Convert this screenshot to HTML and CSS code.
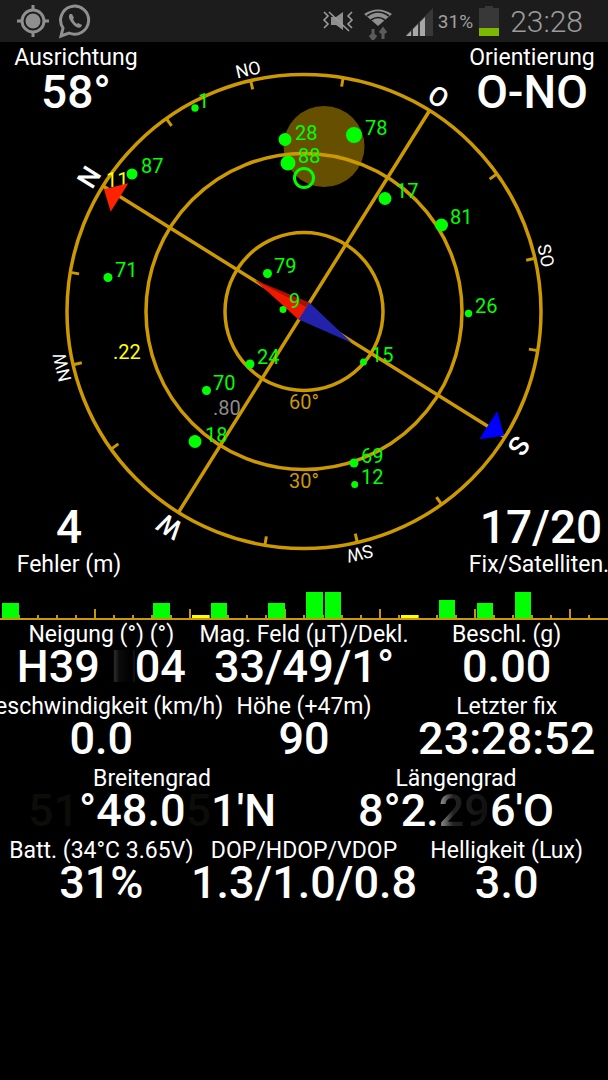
FILE: index.html
```html
<!DOCTYPE html>
<html lang="de">
<head>
<meta charset="utf-8">
<title>GPS Status</title>
<link rel="stylesheet" href="styles.css">
</head>
<body>
<header class="statusbar">
  <div class="status-left">
    <svg class="ico" width="36" height="36" viewBox="0 0 36 36"><circle cx="17" cy="18" r="11" class="ico-line"/><circle cx="17" cy="18" r="7.5" class="ico-fill"/><path d="M17 2v6M17 28v6M1 18h6M27 18h6" class="ico-line"/></svg>
    <svg class="ico" width="34" height="36" viewBox="0 0 34 36"><path d="M3 33l2-8A14 14 0 1 1 11 30z" class="ico-line"/><path d="M12 11c-2 2-1 5 2 9s7 6 9 4l1-2-4-2-1 1c-2-1-3-3-4-5l1-1-2-4z" class="ico-fill"/></svg>
  </div>
  <div class="status-right">
    <svg class="ico" width="32" height="24" viewBox="0 0 32 24"><path d="M9 8h5l7-5v18l-7-5H9z" class="ico-fill"/><path d="M2 3l4 4-4 4 4 4-4 4M30 3l-4 4 4 4-4 4 4 4M7 3l20 19" class="ico-thin"/></svg>
    <svg class="ico wifi" width="28" height="32" viewBox="0 0 28 32"><path d="M14 18L0 6Q14-3 28 6z" class="ico-fill"/><path d="M3 8Q14 0 25 8M7 12Q14 7 21 12" class="ico-cut"/><path d="M9 21v9M6 27l3 4 3-4M19 31v-9M16 25l3-4 3 4" class="ico-dim"/></svg>
    <svg class="ico signal" width="30" height="30" viewBox="0 0 30 30"><path d="M1 29L29 1v28z" class="ico-dark"/><path d="M2 29l5-5v5zM9 29v-7l5-5v12zM16 29V15l5-5v19z" class="ico-bright"/></svg>
    <span class="pct">31%</span>
    <svg class="ico battery" width="20" height="30" viewBox="0 0 20 30"><path d="M6 0h8v2h6v28H0V2h6z" class="ico-dark"/><rect y="22" width="20" height="8" class="batt-level"/></svg>
    <span class="clock">23:28</span>
  </div>
</header>

<section class="compass">
  <svg class="dial" width="608" height="548" viewBox="0 42 608 548">
    <circle cx="324" cy="146.5" r="40.5" class="sun"/>
    <circle cx="304" cy="311.5" r="237" class="ring"/>
    <circle cx="304" cy="311.5" r="158" class="ring"/>
    <circle cx="304" cy="311.5" r="79" class="ring"/>
    <g transform="translate(304 311.5) rotate(-58)">
      <path d="M0-237V237M-237 0H237" class="ring"/>
      <g class="ticks">
        <path transform="rotate(22.5)" d="M0-237v9"/><path transform="rotate(45)" d="M0-237v9"/><path transform="rotate(67.5)" d="M0-237v9"/>
        <path transform="rotate(112.5)" d="M0-237v9"/><path transform="rotate(135)" d="M0-237v9"/><path transform="rotate(157.5)" d="M0-237v9"/>
        <path transform="rotate(202.5)" d="M0-237v9"/><path transform="rotate(225)" d="M0-237v9"/><path transform="rotate(247.5)" d="M0-237v9"/>
        <path transform="rotate(292.5)" d="M0-237v9"/><path transform="rotate(315)" d="M0-237v9"/><path transform="rotate(337.5)" d="M0-237v9"/>
      </g>
      <g class="dirs">
        <text y="-244" class="card">N</text>
        <text y="-242" class="inter" transform="rotate(45)">NO</text>
        <text y="-244" class="card" transform="rotate(90)">O</text>
        <text y="-242" class="inter" transform="rotate(135)">SO</text>
        <text y="-244" class="card" transform="rotate(180)">S</text>
        <text y="-242" class="inter" transform="rotate(225)">SW</text>
        <text y="-244" class="card" transform="rotate(270)">W</text>
        <text y="-242" class="inter" transform="rotate(315)">NW</text>
      </g>
    </g>
    <text x="304" y="409" class="elev">60°</text>
    <text x="304" y="488" class="elev">30°</text>

    <g class="sats">
      <circle cx="195" cy="108" r="3.7"/><text x="198" y="108">1</text>
      <circle cx="132" cy="174" r="5.5"/><text x="141" y="173">87</text>
      <circle cx="108" cy="277.5" r="4.5"/><text x="115" y="277">71</text>
      <circle cx="285" cy="139.5" r="6.5"/><text x="295" y="140">28</text>
      <circle cx="288" cy="163" r="7.5"/><text x="298" y="163">88</text>
      <circle cx="354" cy="135" r="8"/><text x="365" y="135">78</text>
      <circle cx="385" cy="198.5" r="6.5"/><text x="396" y="198">17</text>
      <circle cx="441.5" cy="225" r="6.5"/><text x="450" y="224">81</text>
      <circle cx="468.5" cy="313.5" r="3.7"/><text x="475" y="313">26</text>
      <circle cx="267.5" cy="273.5" r="4.5"/><text x="274" y="273">79</text>
      <circle cx="250" cy="364" r="4.5"/><text x="257" y="364">24</text>
      <circle cx="206.5" cy="390.5" r="4.5"/><text x="213" y="390">70</text>
      <circle cx="195" cy="441.5" r="6.5"/><text x="205" y="442">18</text>
      <circle cx="363.5" cy="362" r="3.5"/><text x="371" y="362">15</text>
      <circle cx="354" cy="463" r="4.5"/><text x="361" y="463">69</text>
      <circle cx="354.7" cy="484.5" r="3.5"/><text x="361" y="484">12</text>
    </g>
    <circle cx="304" cy="178" r="9.5" class="target"/>
    <text x="106" y="187" class="sat-yellow">11</text>
    <text x="113" y="359" class="sat-yellow">.22</text>
    <text x="213" y="415" class="sat-grey">.80</text>

    <polygon points="104,189.3 128.3,183.3 110.7,211.7" class="arrow-n"/>
    <polygon points="497.3,411 504,435.7 479.3,439.3" class="arrow-s"/>
    <polygon points="255,280 309.3,302.5 298.7,319.5" class="needle-dark"/>
    <polygon points="255,280 306,307 298.7,319.5" class="needle-red"/>
    <polygon points="352,343 309.3,302.5 298.7,319.5" class="needle-blue"/>
    <circle cx="283" cy="309.5" r="3.5" class="sat-dot"/>
    <text x="289" y="308" class="sat-label">9</text>
  </svg>

  <div class="corner top-left"><span class="label">Ausrichtung</span><span class="value v-top">58°</span></div>
  <div class="corner top-right"><span class="label">Orientierung</span><span class="value v-top">O-NO</span></div>
  <div class="corner bottom-left"><span class="value v-bottom">4</span><span class="label">Fehler (m)</span></div>
  <div class="corner bottom-right"><span class="value v-bottom">17/20</span><span class="label label-fix">Fix/Satelliten.</span></div>
</section>

<svg class="bars" width="608" height="30" viewBox="0 590 608 30">
  <g class="bar-ticks">
    <path d="M19 615v3M38 615v3M57 615v3M76 615v3M95 609v9M114 615v3M133 615v3M152 615v3M171 615v3M190 609v9M209 615v3M228 615v3M247 615v3M266 615v3M285 609v9M304 615v3M323 615v3M342 615v3M361 615v3M380 609v9M399 615v3M418 615v3M437 615v3M456 615v3M475 609v9M494 615v3M513 615v3M532 615v3M551 615v3M570 609v9M589 615v3"/>
  </g>
  <g class="bar-green">
    <rect x="2" y="603" width="17" height="15"/><rect x="153" y="603" width="17" height="15"/>
    <rect x="211" y="603" width="16" height="15"/><rect x="268" y="603" width="17" height="15"/>
    <rect x="306" y="592" width="17" height="26"/><rect x="325" y="592" width="16" height="26"/>
    <rect x="439" y="600" width="16" height="18"/><rect x="477" y="603" width="16" height="15"/>
    <rect x="515" y="592" width="16" height="26"/>
  </g>
  <g class="bar-yellow"><rect x="192" y="615" width="17" height="3"/><rect x="401" y="615" width="17" height="3"/></g>
  <rect x="0" y="618" width="608" height="2" class="bar-base"/>
</svg>

<main class="stats">
  <div class="row three">
    <div class="cell"><span class="label">Neigung (°) (°)</span><span class="value">H39<span class="smudge"></span>04</span></div>
    <div class="cell"><span class="label">Mag. Feld (µT)/Dekl.</span><span class="value">33/49/1°</span></div>
    <div class="cell"><span class="label">Beschl. (g)</span><span class="value">0.00</span></div>
  </div>
  <div class="row three">
    <div class="cell"><span class="label">Geschwindigkeit (km/h)</span><span class="value">0.0</span></div>
    <div class="cell"><span class="label">Höhe (+47m)</span><span class="value">90</span></div>
    <div class="cell"><span class="label">Letzter fix</span><span class="value">23:28:52</span></div>
  </div>
  <div class="row two">
    <div class="cell"><span class="label">Breitengrad</span><span class="value"><span class="hidden">51</span>°48.0<span class="hidden">5</span>1'N</span></div>
    <div class="cell"><span class="label">Längengrad</span><span class="value">8°2.<span class="blur">29</span>6'O</span></div>
  </div>
  <div class="row three">
    <div class="cell"><span class="label">Batt. (34°C 3.65V)</span><span class="value">31%</span></div>
    <div class="cell"><span class="label">DOP/HDOP/VDOP</span><span class="value">1.3/1.0/0.8</span></div>
    <div class="cell"><span class="label">Helligkeit (Lux)</span><span class="value">3.0</span></div>
  </div>
</main>
</body>
</html>
```

FILE: styles.css
```css
* { box-sizing: border-box; }
html, body { margin: 0; height: 100%; overflow: hidden; background: #000; }
body { width: 608px; height: 1080px; font-family: Roboto, "Liberation Sans", sans-serif; color: #fff; }

.statusbar { height: 42px; background: #1c1c1c; display: flex; justify-content: space-between; align-items: center; }
.status-left { display: flex; align-items: center; gap: 6px; padding-left: 16px; }
.status-right { display: flex; align-items: center; padding-right: 25px; }
.ico { display: block; flex: none; }
.ico-line { fill: none; stroke: #8f8f8f; stroke-width: 3; }
.ico-thin { fill: none; stroke: #9a9a9a; stroke-width: 1.6; }
.ico-fill { fill: #8f8f8f; }
.ico-cut { fill: none; stroke: #1c1c1c; stroke-width: 1.6; }
.ico-dim { fill: none; stroke: #5c5c5c; stroke-width: 3; }
.ico-dark { fill: #383838; }
.ico-bright { fill: #a8a8a8; }
.batt-level { fill: #7cb800; }
.wifi { margin-left: 10px; margin-top: 6px; }
.signal { margin-left: 12px; margin-top: 2px; }
.pct { margin-left: 4px; font-size: 19px; color: #a0a0a0; }
.battery { margin-left: 6px; }
.clock { margin-left: 11px; font-size: 30px; font-weight: 300; color: #9c9c9c; }

.compass { display: grid; height: 548px; }
.compass > * { grid-area: 1 / 1; }
.dial { display: block; }
.sun { fill: #665000; }
.ring { fill: none; stroke: #cc9900; stroke-width: 3.5; }
.ticks path { fill: none; stroke: #cc9900; stroke-width: 3; }
.dirs text { fill: #fff; text-anchor: middle; font-family: Roboto, sans-serif; }
.card { font-size: 27px; font-weight: 500; }
.inter { font-size: 18px; }
.elev { fill: #cc9900; font-size: 20px; text-anchor: middle; font-family: Roboto, sans-serif; }
.sats circle, .sat-dot { fill: #00ff00; }
.sats text, .sat-label { fill: #00ff00; font-size: 20px; font-family: Roboto, sans-serif; }
.target { fill: none; stroke: #00ff00; stroke-width: 3; }
.sat-yellow { fill: #ffff00; font-size: 20px; font-family: Roboto, sans-serif; }
.sat-grey { fill: #8c8c8c; font-size: 20px; font-family: Roboto, sans-serif; }
.arrow-n { fill: #ff2200; }
.arrow-s { fill: #0000ff; }
.needle-dark { fill: #a81000; }
.needle-red { fill: #f01800; }
.needle-blue { fill: #2222aa; }

.corner { display: flex; flex-direction: column; align-items: center; white-space: nowrap; }
.top-left { justify-self: start; align-self: start; width: 152px; margin-top: 3px; }
.top-right { justify-self: end; align-self: start; width: 152px; margin-top: 3px; }
.bottom-left { justify-self: start; align-self: end; width: 138px; margin-bottom: 12px; }
.bottom-right { justify-self: end; align-self: end; width: 134px; margin-bottom: 12px; }
.label-fix { margin-left: -4px; }

.label { display: block; font-size: 23px; line-height: 26px; white-space: nowrap; }
.value { display: block; font-size: 45px; line-height: 44px; font-weight: 500; white-space: nowrap; }
.stats .value { margin-top: -3px; }
.v-top { font-size: 46px; margin-top: -1px; }
.v-bottom { font-size: 46px; margin-bottom: 3px; }

.bars { display: block; }
.bar-ticks path { fill: none; stroke: #c8960a; stroke-width: 2; }
.bar-green { fill: #00ff00; }
.bar-yellow { fill: #ffff00; }
.bar-base { fill: #cc9900; }

.stats { display: flex; flex-direction: column; }
.row { display: grid; height: 72px; padding-top: 2px; }
.three { grid-template-columns: repeat(3, 1fr); }
.two { grid-template-columns: repeat(2, 1fr); }
.cell { display: flex; flex-direction: column; align-items: center; min-width: 0; }
.smudge { display: inline-block; width: 35px; height: 32px; background: linear-gradient(90deg, #000 38%, #2c2c2c 42%, #0a0a0a 55%, #000 90%, #161616); }
.hidden { color: #0c0c08; }
.blur { color: transparent; background: linear-gradient(90deg, #9a9a9a, #222 28%, #111 90%); background-clip: text; -webkit-background-clip: text; }
```
